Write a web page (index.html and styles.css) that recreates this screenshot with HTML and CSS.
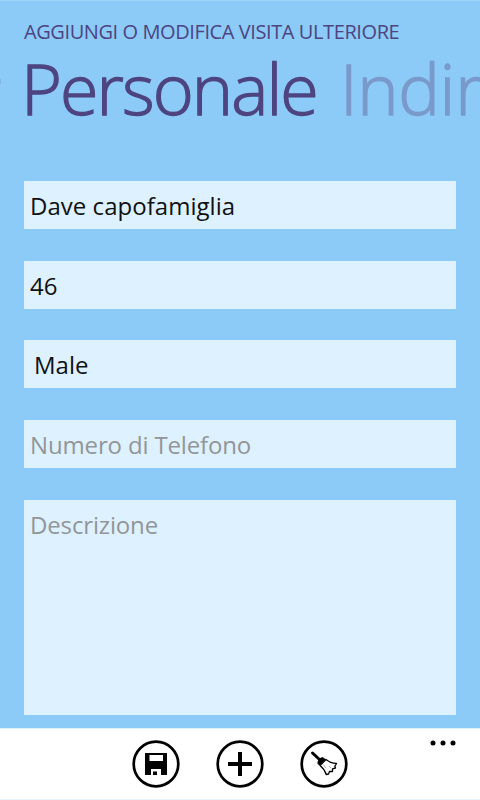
FILE: index.html
```html
<!DOCTYPE html>
<html lang="it">
<head>
<meta charset="utf-8">
<title>Visita ulteriore</title>
<link rel="stylesheet" href="styles.css">
</head>
<body>
<main class="page">
  <header class="header">
    <div class="app-title"><span>AGGIUNGI O MODIFICA VISITA ULTERIORE</span></div>
    <nav class="pivot"><span class="tab active">Personale</span><span class="tab next">Indirizzo</span></nav>
  </header>
  <form class="form">
    <div class="field"><span class="name">Dave capofamiglia</span></div>
    <div class="field"><span>46</span></div>
    <div class="field picker"><span>Male</span></div>
    <div class="field hint"><span class="phone">Numero di Telefono</span></div>
    <div class="field hint area"><span>Descrizione</span></div>
  </form>
  <footer class="appbar">
    <svg class="icon" viewBox="0 0 48 48"><circle cx="24" cy="24" r="22.3" fill="none" stroke="#000" stroke-width="2.7"/><path fill-rule="evenodd" d="M13 13H35V35H29V29H19V35H13ZM17.5 15V21H31V15Z"/><path d="M21 31.5H25V35H21Z"/></svg>
    <svg class="icon" viewBox="0 0 48 48"><circle cx="24" cy="24" r="22.3" fill="none" stroke="#000" stroke-width="2.7"/><path d="M24 12V36M12 24H36" stroke="#000" stroke-width="4"/></svg>
    <svg class="icon" viewBox="0 0 48 48"><circle cx="24" cy="24" r="22.3" fill="none" stroke="#000" stroke-width="2.7"/><path d="M12.5 13L20 20" stroke="#000" stroke-width="3" stroke-linecap="round"/><path d="M17.5 24Q17 19 22.5 17L26 19.5L20 25.5Z"/><path d="M26 19.5Q30 23 36.5 23.5L34.8 26.3L35.5 28L32.5 28.8L32.5 31.5L29.5 31.5L28.5 34L26.2 34.5Q24.5 29 20 25.5Z" fill="#fff" stroke="#000" stroke-width="1.3" stroke-linejoin="round"/><path d="M23 24.5L26 28M29 26L31 28" stroke="#888" stroke-width=".7"/></svg>
    <svg class="more" viewBox="0 0 26 6"><circle cx="3" cy="3" r="2.5"/><circle cx="13" cy="3" r="2.5"/><circle cx="23" cy="3" r="2.5"/></svg>
  </footer>
</main>
</body>
</html>
```
FILE: styles.css
```css
* { box-sizing: border-box; }
body { margin: 0; font-family: "Open Sans", "Noto Sans", sans-serif; }
.page { width: 480px; height: 800px; overflow: hidden; background: #8ccaf7; border-top: 1px solid #a0d3f8; display: flex; flex-direction: column; }
.header { height: 180px; padding: 18px 0 0 24px; color: #4d4480; }
.app-title { font-size: 20px; line-height: 26px; white-space: nowrap; letter-spacing: -.41px; }
.pivot { position: relative; display: flex; gap: 23px; font-size: 70px; line-height: 87px; font-weight: 300; white-space: nowrap; letter-spacing: -1.9px; margin-left: -3px; -webkit-text-stroke: 1.3px currentColor; }
.pivot::before { content: ""; position: absolute; left: -21px; top: 34px; width: 1px; height: 5px; background: #7fb4e4; }
.next { color: #799acb; letter-spacing: -.3px; }
.form { display: flex; flex-direction: column; gap: 31.7px; width: 432px; margin-left: 24px; height: 547px; }
.field { height: 48px; flex: none; background: #def1ff; color: #111; padding: 8px 6px; font-size: 24px; line-height: 34px; white-space: nowrap; letter-spacing: 0.03px; }
.picker { padding-left: 10px; }
.hint { color: #929698; letter-spacing: -.15px; }
.area { height: 215px; }
.appbar { position: relative; flex: 1; background: #fff; border-top: 1px solid #def1ff; border-bottom: 1px solid #e4f3fd; display: flex; justify-content: center; gap: 36px; padding-top: 11px; }
.icon { width: 48px; height: 48px; }
.more { position: absolute; right: 24px; top: 11px; width: 26px; height: 6px; }
```
